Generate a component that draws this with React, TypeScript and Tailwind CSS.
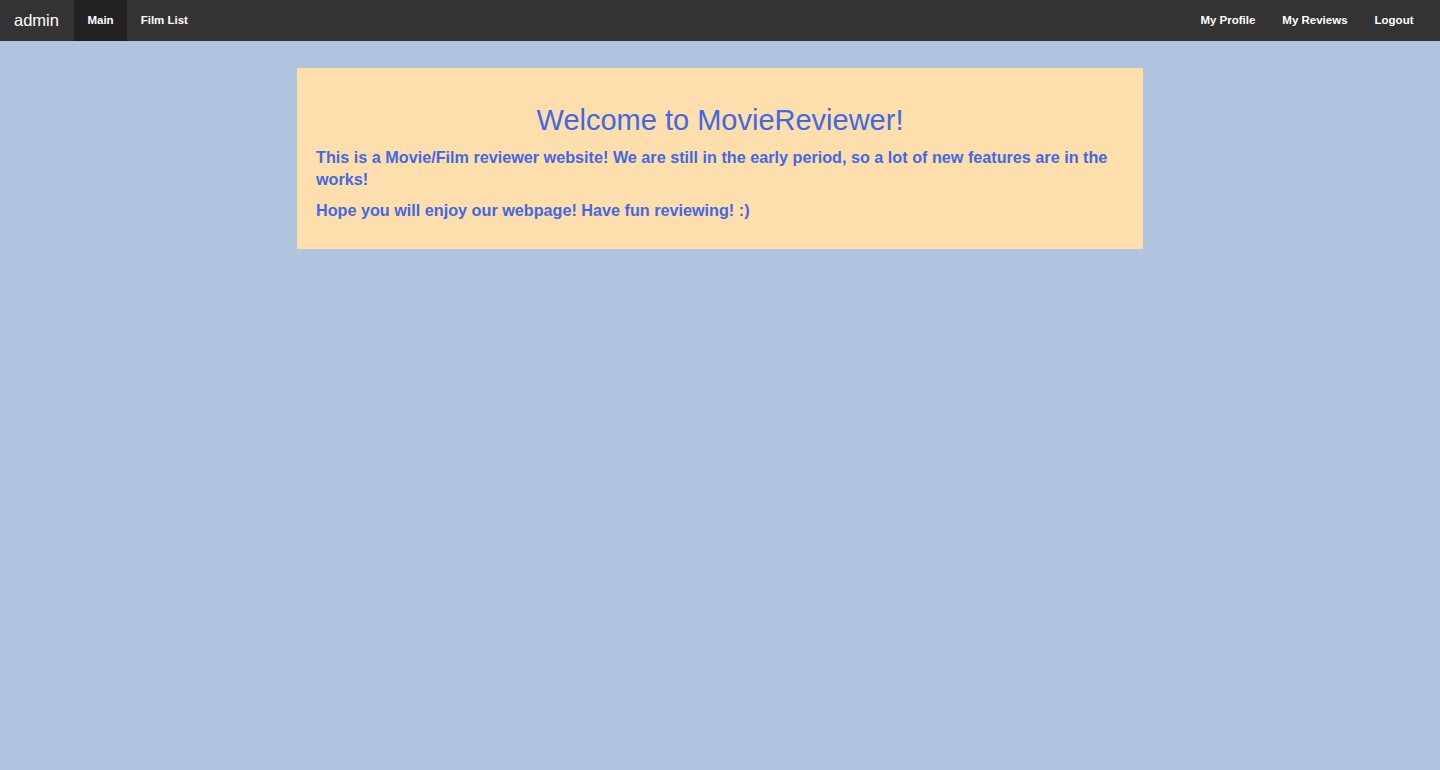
const leftLinks = [
  { label: "Main", active: true },
  { label: "Film List", active: false },
];

const rightLinks = ["My Profile", "My Reviews", "Logout"];

export default function App() {
  return (
    <div className="min-h-[770px] bg-[#b0c4de] font-['Liberation_Sans',Arial,sans-serif]">
      <nav className="flex h-[41px] items-stretch justify-between bg-[#333333] pr-[13px]">
        <div className="flex items-stretch">
          <span className="flex items-center pl-[14px] pr-[15px] text-[16.5px] text-white">admin</span>
          {leftLinks.map((link) => (
            <a
              key={link.label}
              className={`flex items-center px-[13.5px] text-[11.5px] font-bold text-white ${
                link.active ? "bg-[#222222]" : ""
              }`}
            >
              {link.label}
            </a>
          ))}
        </div>
        <div className="flex items-stretch">
          {rightLinks.map((label) => (
            <a key={label} className="flex items-center px-[13.5px] text-[11.5px] font-bold text-white">
              {label}
            </a>
          ))}
        </div>
      </nav>

      <div className="mx-auto mt-[27px] w-[846px] bg-[#ffdead] px-[19px] pt-[34px] pb-[28px] text-[#4169e1]">
        <h1 className="text-center text-[29px] leading-[36px]">Welcome to MovieReviewer!</h1>
        <p className="mt-[8px] text-[16.2px] font-bold leading-[22px]">
          This is a Movie/Film reviewer website! We are still in the early period, so a lot of new
          features are in the works!
        </p>
        <p className="mt-[9px] text-[16.2px] font-bold leading-[22px]">
          Hope you will enjoy our webpage! Have fun reviewing! :)
        </p>
      </div>
    </div>
  );
}
